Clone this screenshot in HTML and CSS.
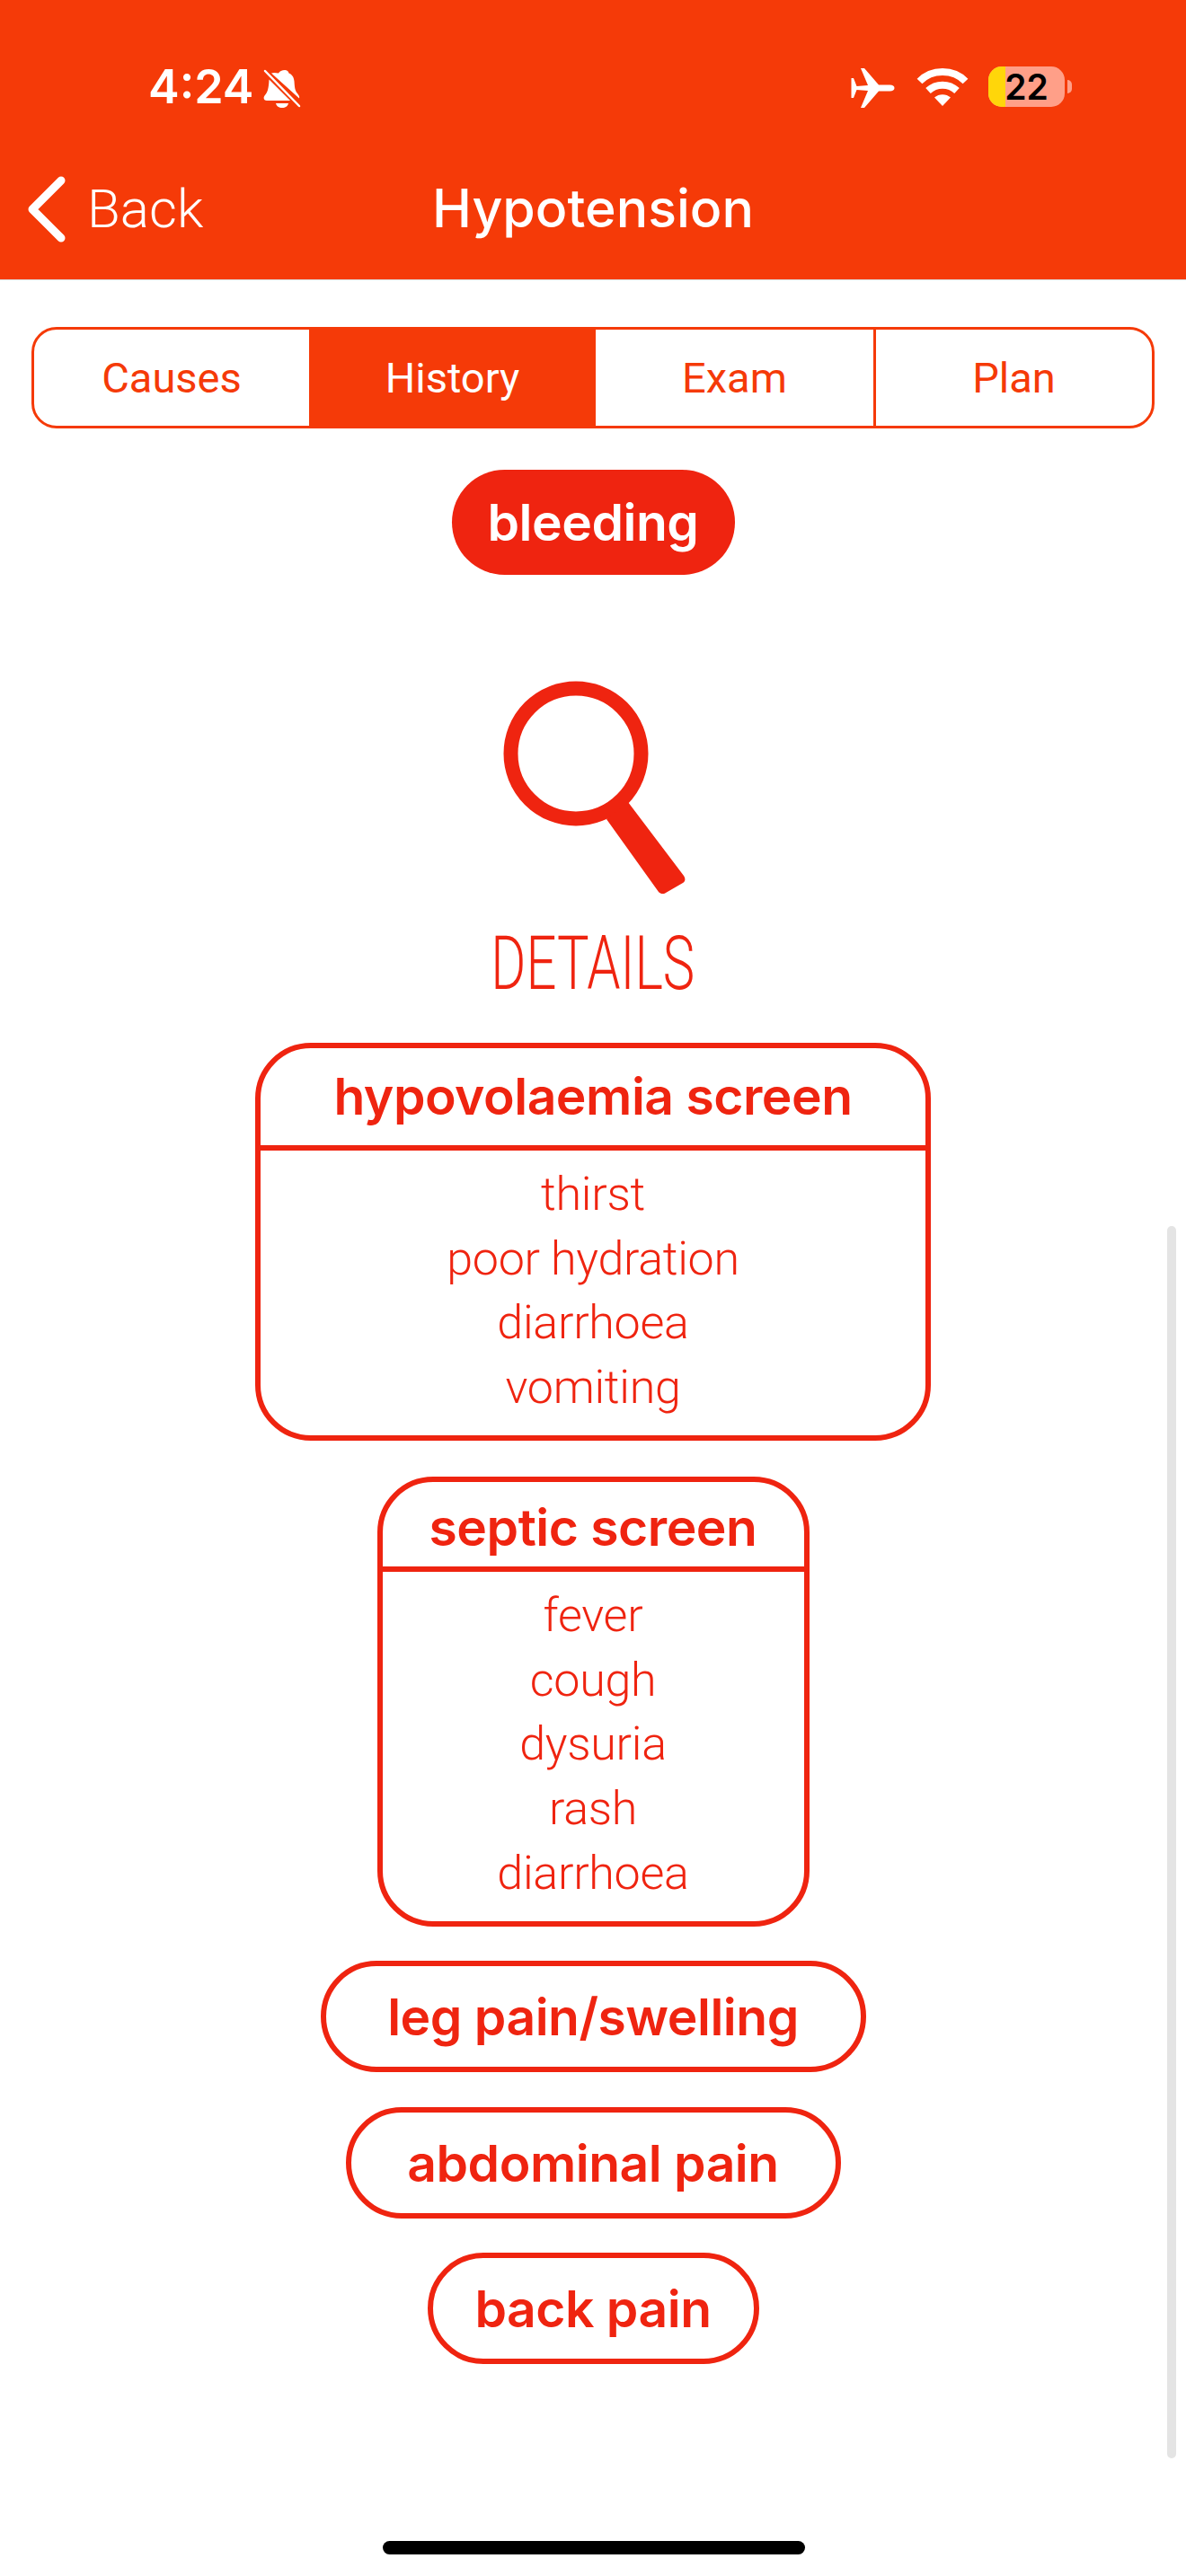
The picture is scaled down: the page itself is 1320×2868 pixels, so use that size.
FILE: index.html
```html
<!DOCTYPE html>
<html lang="en">
<head>
<meta charset="utf-8">
<title>Hypotension</title>
<link rel="stylesheet" href="styles.css">
</head>
<body>
<div class="screen">
  <header class="header">
    <div class="status">
      <div class="status-left">
        <span class="time">4:24</span>
        <svg class="bell" viewBox="0 0 42 43" aria-hidden="true">
          <path class="fill" d="M24 1c2.500 0 4 1.500 4.500 3.500 3.500 1.500 5.500 4 6 9 .5 6 .5 10 3.500 13.500 2 2.500 2.500 3.500 2 5.500L9 4.500c2-.8 4.500-.8 8 0C18 2.500 21 1 24 1Z"/>
          <path class="fill" d="M6.500 11.500 30 35H4c-3 0-4.500-3-2.500-5.500 3.500-4 4.500-8 5-18Z"/>
          <path class="fill" d="M14 38h14c-.5 3-3.500 5-7 5s-6.500-2-7-5Z"/>
          <path class="slash" d="M2 2 40 41"/>
        </svg>
      </div>
      <div class="status-right">
        <svg class="plane" viewBox="0 0 49 44" aria-hidden="true">
          <path class="fill" d="M48.500 22c0-2-2-3.500-5-3.500H31L15 0h-4l8 19-12.500 1L3 11H.5v22H3l3.500-9 12.500 1-8 19h4l16-18.500h12.500c3 0 5-1.500 5-3.500Z"/>
        </svg>
        <svg class="wifi" viewBox="0 0 58 43" aria-hidden="true">
          <path class="arc" d="M3.500 15.500C17 1.500 41 1.500 54.500 15.500"/>
          <path class="arc" d="M13 26c9-8.500 23-8.500 32 0"/>
          <path class="fill" d="M20 33.500c5-4.500 13-4.500 18 0L29 43Z"/>
        </svg>
        <div class="battery">
          <div class="battery-body"><span class="battery-low"></span><span class="battery-num">22</span></div>
          <span class="battery-cap"></span>
        </div>
      </div>
    </div>
    <nav class="nav">
      <a class="back">
        <svg class="chevron" viewBox="0 0 44 74" aria-hidden="true"><path d="M37 5 5 37l32 32"/></svg>
        <span>Back</span>
      </a>
      <h1 class="title">Hypotension</h1>
    </nav>
  </header>

  <main class="content">
    <div class="tabs">
      <span class="tab">Causes</span>
      <span class="tab tab-active">History</span>
      <span class="tab">Exam</span>
      <span class="tab">Plan</span>
    </div>

    <div class="pill pill-solid">bleeding</div>

    <svg class="magnifier" viewBox="0 0 204 238" aria-hidden="true">
      <circle cx="81" cy="82" r="72.500"/>
      <path d="M115 155 139 136 201 218c2 3 2 6-1 8l-19 11c-3 2-6 1-8-1Z"/>
    </svg>

    <h2 class="details">DETAILS</h2>

    <section class="box box-wide">
      <h3 class="box-head">hypovolaemia screen</h3>
      <ul class="box-list">
        <li>thirst</li>
        <li>poor hydration</li>
        <li>diarrhoea</li>
        <li>vomiting</li>
      </ul>
    </section>

    <section class="box box-narrow">
      <h3 class="box-head">septic screen</h3>
      <ul class="box-list">
        <li>fever</li>
        <li>cough</li>
        <li>dysuria</li>
        <li>rash</li>
        <li>diarrhoea</li>
      </ul>
    </section>

    <div class="pill pill-line pill-leg">leg pain/swelling</div>
    <div class="pill pill-line pill-abdo">abdominal pain</div>
    <div class="pill pill-line pill-back">back pain</div>
  </main>

  <div class="scrollbar"></div>
  <div class="home-bar"></div>
</div>
</body>
</html>
```
FILE: styles.css
```css
* { box-sizing: border-box; }
html, body { margin: 0; padding: 0; background: #fff; }
.screen {
  position: relative;
  width: 1320px;
  height: 2868px;
  overflow: hidden;
  font-family: Inter, "Liberation Sans", sans-serif;
  color: #ef2410;
}
.header {
  height: 312px;
  background: #f53a08;
  border-bottom: 1px solid #d9d9d9;
  color: #fff;
}
.fill { fill: #fff; }
.status {
  height: 196px;
  padding: 74px 127px 0 165px;
  display: flex;
  justify-content: space-between;
  align-items: flex-start;
}
.status-left { display: flex; align-items: flex-start; gap: 11px; }
.time {
  font-family: Inter, sans-serif;
  font-weight: 600;
  font-size: 52px;
  line-height: 46px;
}
.bell { width: 42px; height: 43px; margin-top: 3px; }
.slash { stroke: #fff; stroke-width: 2.500; stroke-linecap: round; fill: none; }
.status-right { display: flex; align-items: flex-start; }
.plane { width: 49px; height: 44px; margin-top: 2px; }
.wifi { width: 58px; height: 43px; margin: 1px 22px 0 24px; }
.arc { stroke: #fff; stroke-width: 8; fill: none; }
.battery { display: flex; align-items: center; gap: 3px; }
.battery-body {
  position: relative;
  width: 85px;
  height: 45px;
  border-radius: 15px;
  background: #ff9f88;
  overflow: hidden;
  display: flex;
  justify-content: center;
}
.battery-low {
  position: absolute;
  left: 0;
  top: 0;
  bottom: 0;
  width: 19px;
  background: #ffd60a;
}
.battery-num {
  position: relative;
  color: #000;
  font-family: Inter, sans-serif;
  font-weight: 600;
  font-size: 39px;
  line-height: 45px;
}
.battery-cap {
  width: 5px;
  height: 15px;
  border-radius: 0 5px 5px 0;
  background: #ff9f88;
}
.nav {
  position: relative;
  height: 115px;
  display: flex;
  justify-content: center;
  align-items: center;
}
.back {
  position: absolute;
  left: 31px;
  top: 0;
  display: flex;
  align-items: center;
  gap: 22px;
  font-family: Roboto, sans-serif;
  font-weight: 300;
  font-size: 60px;
  line-height: 74px;
}
.chevron { width: 44px; height: 74px; }
.chevron path { fill: none; stroke: #fff; stroke-width: 9; stroke-linecap: round; stroke-linejoin: round; }
.title {
  margin: 0 0 44px;
  font-family: Inter, sans-serif;
  font-weight: 500;
  font-size: 59px;
  line-height: 74px;
}

.content {
  display: flex;
  flex-direction: column;
  align-items: center;
  padding-top: 52px;
}
.tabs {
  width: 1250px;
  height: 113px;
  display: grid;
  grid-template-columns: 306px 316px 312px 1fr;
  border: 3px solid #f53a08;
  border-radius: 28px;
  overflow: hidden;
  color: #f53a08;
  font-family: Roboto, sans-serif;
  font-size: 47px;
}
.tab {
  display: flex;
  align-items: center;
  justify-content: center;
  border-left: 3px solid #f53a08;
}
.tab:first-child { border-left: 0; }
.tab-active { background: #f53a08; color: #fff; }

.pill {
  display: flex;
  align-items: center;
  justify-content: center;
  border-radius: 64px;
  font-weight: 600;
  font-size: 57px;
  letter-spacing: -.5px;
}
.pill-solid {
  margin-top: 46px;
  width: 315px;
  height: 117px;
  background: #ef2410;
  color: #fff;
}
.pill-line {
  height: 124px;
  border: 6px solid #ef2410;
}
.pill-leg { width: 607px; margin-top: 38px; }
.pill-abdo { width: 551px; margin-top: 39px; }
.pill-back { width: 369px; margin-top: 38px; }

.magnifier { display: block; width: 204px; height: 238px; margin: 117px 0 0 3px; }
.magnifier circle { fill: none; stroke: #ef2410; stroke-width: 16; }
.magnifier path { fill: #ef2410; }

.details {
  margin: 32px 0 0;
  height: 92px;
  font-family: Roboto, sans-serif;
  font-weight: 300;
  font-size: 84px;
  line-height: 92px;
  transform: scaleX(.71);
}

.box {
  margin-top: 42px;
  border: 6px solid #ef2410;
  border-radius: 62px;
}
.box-wide { width: 752px; }
.box-narrow { width: 481px; margin-top: 40px; }
.box-head {
  margin: 0;
  font-size: 57px;
  font-weight: 600;
  letter-spacing: -.5px;
  text-align: center;
  border-bottom: 6px solid #ef2410;
}
.box-wide .box-head { height: 114px; line-height: 108px; }
.box-narrow .box-head { height: 100px; line-height: 102px; }
.box-list {
  list-style: none;
  margin: 0;
  padding: 13px 0 17px;
  text-align: center;
  font-family: Roboto, sans-serif;
  font-weight: 300;
  font-size: 52px;
  letter-spacing: -.3px;
  line-height: 71.700px;
}
.box-narrow .box-list { padding: 13px 0 18px; }

.scrollbar {
  position: absolute;
  left: 1299px;
  top: 1365px;
  width: 10px;
  height: 1372px;
  border-radius: 5px;
  background: #e4e4e4;
}
.home-bar {
  position: absolute;
  left: 426px;
  top: 2829px;
  width: 470px;
  height: 15px;
  border-radius: 8px;
  background: #000;
}
```
